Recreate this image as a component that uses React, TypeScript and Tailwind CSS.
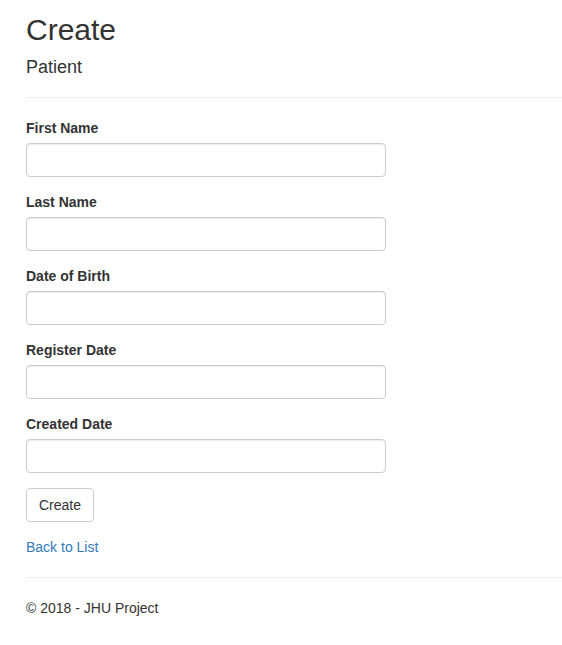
const fields = ["First Name", "Last Name", "Date of Birth", "Register Date", "Created Date"];

const inputClass =
  "block h-[34px] w-[360px] rounded-[4px] border border-[#ccc] bg-white px-3 py-[6px] text-[14px] text-[#555] shadow-[inset_0_1px_1px_rgba(0,0,0,0.075)] outline-none";

export default function App() {
  return (
    <div className="min-h-[645px] bg-white pl-[26px] text-[14px] leading-[20px] text-[#333] [font-family:'Liberation_Sans',Arial,sans-serif]">
      <h2 className="pt-[13px] text-[30px] leading-[33px] font-normal">Create</h2>
      <h4 className="mt-[11px] text-[18px] leading-[20px] font-normal">Patient</h4>
      <hr className="mt-[20px] border-0 border-t border-[#eee]" />

      <form className="pt-[20px]" onSubmit={(e) => e.preventDefault()}>
        {fields.map((f) => (
          <div key={f} className="mb-[15px]">
            <label className="mb-[5px] block font-bold">{f}</label>
            <input type="text" className={inputClass} />
          </div>
        ))}
        <div className="mb-[15px]">
          <button
            type="submit"
            className="h-[34px] rounded-[4px] border border-[#ccc] bg-white px-[12px] text-[14px] text-[#333]"
          >
            Create
          </button>
        </div>
      </form>

      <div>
        <a href="#" className="text-[#337ab7]">
          Back to List
        </a>
      </div>

      <hr className="mt-[20px] border-0 border-t border-[#eee]" />
      <footer className="pt-[20px]">
        <p>© 2018 - JHU Project</p>
      </footer>
    </div>
  );
}
